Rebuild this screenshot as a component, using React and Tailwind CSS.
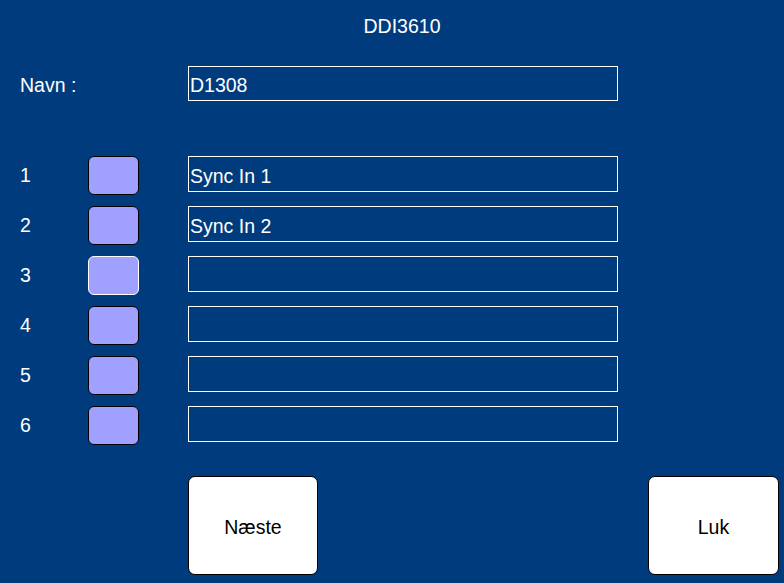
import React from "react";

const rows = [
  { n: "1", text: "Sync In 1" },
  { n: "2", text: "Sync In 2" },
  { n: "3", text: "", selected: true },
  { n: "4", text: "" },
  { n: "5", text: "" },
  { n: "6", text: "" },
];

export default function App() {
  return (
    <div
      className="w-[784px] h-[583px] bg-[#003c7d] text-white flex flex-col overflow-hidden text-[19.5px] leading-none"
      style={{ fontFamily: '"Liberation Sans", Arial, sans-serif' }}
    >
      <div className="h-[50px] flex items-center justify-center pl-[20px] pt-[4px]">DDI3610</div>

      <div className="mt-[16px] flex items-center h-[35px]">
        <div className="w-[188px] pl-[20px] pt-[4px]">Navn :</div>
        <div className="w-[430px] h-[35px] border border-white flex items-center pl-[1px] pt-[4px]">D1308</div>
      </div>

      <div className="mt-[55px] flex flex-col gap-[11px]">
        {rows.map((r) => (
          <div key={r.n} className="flex items-start h-[39px]">
            <div className="w-[88px] pl-[20px] h-[37px] flex items-center pt-[3px]">{r.n}</div>
            <div
              className={
                r.selected
                  ? "w-[51px] h-[39px] rounded-[6px] bg-[#a0a0ff] border border-white"
                  : "w-[51px] h-[39px] rounded-[6px] bg-[#a0a0ff] border border-black"
              }
            />
            <div className="ml-[49px] w-[430px] h-[36px] border border-white flex items-center pl-[1px] pt-[5px]">
              {r.text}
            </div>
          </div>
        ))}
      </div>

      <div className="mt-[31px] flex">
        <button className="ml-[188px] w-[130px] h-[99px] bg-white border border-black rounded-[7px] text-black flex items-center justify-center pt-[4px]">
          Næste
        </button>
        <button className="ml-[330px] w-[131px] h-[99px] bg-white border border-black rounded-[7px] text-black flex items-center justify-center pt-[4px]">
          Luk
        </button>
      </div>
    </div>
  );
}
